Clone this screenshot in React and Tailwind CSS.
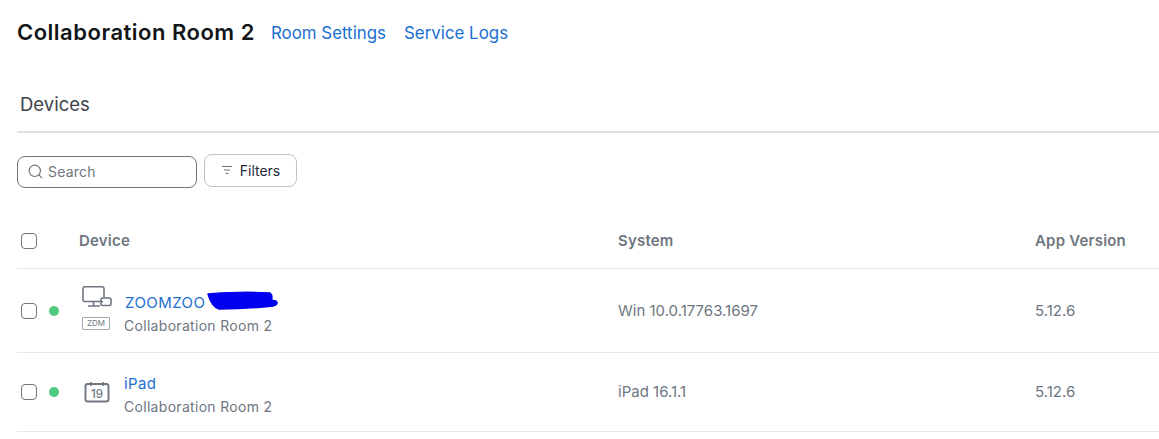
import { Search } from "lucide-react";

const font = { fontFamily: "Inter, 'Liberation Sans', sans-serif" };

const Checkbox = () => (
  <span className="block w-4 h-4 border border-[#6e7680] rounded-[4px] bg-white" />
);

const DesktopIcon = () => (
  <svg width="30" height="21" viewBox="0 0 30 21" fill="none" stroke="#6e7680" strokeWidth="1.6">
    <path d="M21 15.5H3a2 2 0 0 1-2-2V2.7a2 2 0 0 1 2-2h17a2 2 0 0 1 2 2V11" />
    <path d="M11.5 15.5v4M6 20h12" />
    <rect x="19" y="12" width="10" height="7.5" rx="1.5" />
  </svg>
);

const CalendarIcon = () => (
  <svg width="26" height="22" viewBox="0 0 26 22" fill="none" stroke="#6e7680" strokeWidth="1.9">
    <rect x="1.5" y="3" width="23" height="17.5" rx="2" />
    <path d="M7 1v4M19 1v4" strokeWidth="1.5" />
    <text x="13" y="16.5" textAnchor="middle" fontSize="11.5" fontWeight="500" fill="#6e7680" stroke="none" style={font}>19</text>
  </svg>
);

const Row = ({ icon, name, system, version, scribble, className, valuePad }) => (
  <div className={`grid grid-cols-[62px_539px_417px_1fr] border-b border-[#e8e9eb] ${className}`}>
    <div className="flex items-center pl-[4px] gap-[12px]">
      <Checkbox />
      <span className="w-[10px] h-[10px] rounded-full bg-[#4fc97e]" />
    </div>
    <div className="flex items-center">
      <div className="w-[45px] flex flex-col items-start">{icon}</div>
      <div className="relative pt-[7px]">
        <div className="text-[15px] leading-[20px] tracking-[0.4px] text-[#1a6fd1]">{name}</div>
        <div className="text-[14px] leading-[20px] tracking-[0.3px] mt-[3px] text-[#6e7680]">Collaboration Room 2</div>
        {scribble && (
          <svg className="absolute left-[81px] top-[3px]" width="74" height="24" viewBox="0 0 74 24">
            <path d="M3 5C20 3 50 3 65 4C68 6 67 10 66 11L71 12C73 14 72 16 68 17C50 19 30 20 14 20C8 18 5 12 3 5Z" fill="#0000f0" stroke="#0000f0" strokeWidth="1.5" strokeLinejoin="round" />
          </svg>
        )}
      </div>
    </div>
    <div className={`flex items-center text-[15px] text-[#6e7680] ${valuePad}`}>{system}</div>
    <div className={`flex items-center text-[15px] text-[#6e7680] ${valuePad}`}>{version}</div>
  </div>
);

export default function App() {
  return (
    <div className="bg-white w-[1159px] h-[439px] overflow-hidden pl-[17px]" style={font}>
      {/* Title and links */}
      <div className="flex items-center h-[64px] pt-[1px]">
        <h1 className="text-[22px] font-semibold text-[#131619] tracking-[0.5px] mr-[16px]">Collaboration Room 2</h1>
        <a className="text-[16.9px] leading-[26px] pt-[1px] text-[#1a6fd1] mr-[18px]">Room Settings</a>
        <a className="text-[16.9px] leading-[26px] pt-[1px] text-[#1a6fd1]">Service Logs</a>
      </div>

      {/* Tab */}
      <div className="h-[69px] pt-[28px] pl-[3px] border-b-2 border-[#e0e1e3] text-[18.5px] leading-[24px] text-[#3d4248]">
        Devices
      </div>

      {/* Search and filters */}
      <div className="flex items-center gap-[7px] mt-[20px] h-[34px]">
        <div className="flex items-center gap-[4px] w-[180px] h-[32px] mt-[3px] pl-[9px] border border-[#6e7680] rounded-[8px]">
          <Search size={17} color="#6e7680" strokeWidth={1.6} />
          <span className="text-[14px] tracking-[0.2px] text-[#6e7680]">Search</span>
        </div>
        <button className="flex items-center justify-center gap-[7px] w-[93px] h-[33px] border border-[#bfc2c7] rounded-[8px] text-[14px] text-[#222b38]">
          <svg width="12" height="10" viewBox="0 0 12 10" stroke="#6e7680" strokeWidth="1.2">
            <path d="M1 1.5h10M3 5h6M4.5 8.5h3" />
          </svg>
          Filters
        </button>
      </div>

      {/* Table header */}
      <div className="grid grid-cols-[62px_539px_417px_1fr] h-[82px] pt-[27px] border-b border-[#e8e9eb] text-[15px] tracking-[0.2px] font-semibold text-[#6e7680]">
        <div className="flex items-center pl-[4px]"><Checkbox /></div>
        <div className="flex items-center">Device</div>
        <div className="flex items-center">System</div>
        <div className="flex items-center">App Version</div>
      </div>

      <Row
        className="h-[84px]"
        valuePad="pt-[2px]"
        icon={
          <div className="flex flex-col gap-[10px] items-start pl-[3px] mt-[-6px]">
            <DesktopIcon />
            <span className="w-[28px] h-[13px] rounded-[1px] border border-[#a3a8ae] text-[8px] leading-[11px] text-center text-[#6e7680]">ZDM</span>
          </div>
        }
        name={<span className="pl-[1px] tracking-[0.45px]">ZOOMZOO</span>}
        scribble
        system="Win 10.0.17763.1697"
        version="5.12.6"
      />
      <Row
        className="h-[79px]"
        icon={<div className="pl-[5px]"><CalendarIcon /></div>}
        name="iPad"
        system="iPad 16.1.1"
        version="5.12.6"
      />
    </div>
  );
}
